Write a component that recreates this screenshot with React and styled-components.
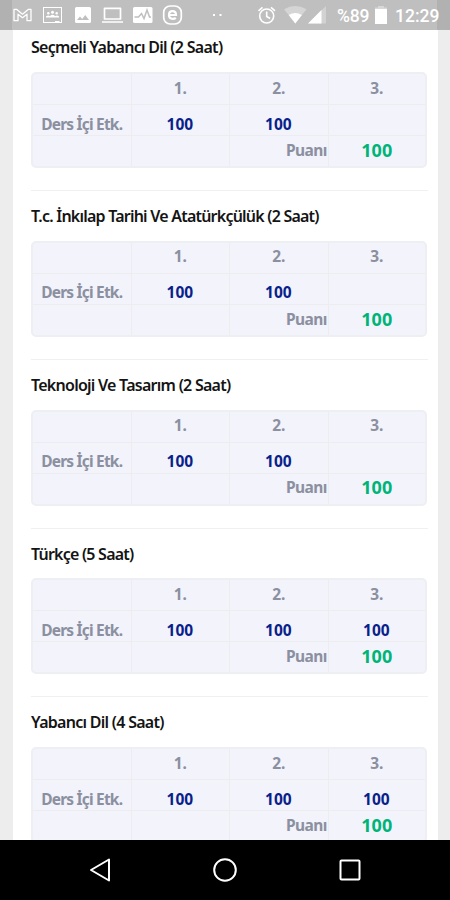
import React from "react";
import styled, { createGlobalStyle } from "styled-components";

const GlobalStyle = createGlobalStyle`
  * { box-sizing: border-box; }
  body { margin: 0; background: #ededed; }
`;

const Screen = styled.div`
  width: 450px;
  height: 900px;
  display: flex;
  flex-direction: column;
  overflow: hidden;
  background: #ededed;
  font-family: "Noto Sans", "Open Sans", sans-serif;
`;

const StatusBar = styled.header`
  flex: none;
  height: 30px;
  display: flex;
  align-items: center;
  background: linear-gradient(90deg, #b1b1b1 12px, #bfbfbf 12px, #bfbfbf 437px, #b1b1b1 437px);
  color: #fff;
  font: 500 17.5px/30px Roboto, sans-serif;
  white-space: nowrap;
`;

const StatusIcons = styled.svg`
  flex: none;
  display: block;
`;

const Battery = styled.span`
  flex: none;
  width: 37.5px;
  margin-left: 7px;
  padding-top: 1px;
  letter-spacing: -0.15px;
`;

const Clock = styled.time`
  margin-left: 8.5px;
  padding-top: 1px;
`;

const Sheet = styled.main`
  flex: 1;
  min-height: 0;
  overflow: hidden;
  margin: 0 12.5px;
  padding: 0 10px 0 18.5px;
  background: #fff;
`;

const Lesson = styled.section`
  height: 168.75px;
  border-bottom: 1px solid #f0f0f0;
  padding-top: 12.2px;
  &:first-child {
    height: 161px;
    padding-top: 4.45px;
  }
`;

const Title = styled.h2`
  margin: 0;
  height: 37.8px;
  font-size: 16px;
  line-height: 26px;
  font-weight: 600;
  color: #141414;
  white-space: nowrap;
  letter-spacing: ${(p) => p.$spacing}px;
`;

const Grades = styled.div`
  width: 396px;
  height: 96px;
  display: grid;
  grid-template-columns: 98.5px 98.5px 98.5px 1fr;
  grid-template-rows: 31px 31px 1fr;
  border: 2px solid #eeeff2;
  border-radius: 5px;
  background: #f2f3fb;
  overflow: hidden;
`;

const COLORS = { label: "#8b90a0", mark: "#0a1f8a", score: "#00b478" };

const Cell = styled.div`
  display: flex;
  align-items: center;
  justify-content: ${(p) => p.$align || "center"};
  border-right: ${(p) => (p.$last ? 0 : 1)}px solid #ededef;
  border-bottom: ${(p) => (p.$bottom ? 0 : 1)}px solid #ededef;
  padding-top: ${(p) => p.$drop || 0}px;
  padding-bottom: ${(p) => p.$lift || 0}px;
  color: ${(p) => COLORS[p.$tone || "label"]};
  font-size: ${(p) => (p.$tone === "score" ? 18 : 15.5)}px;
  line-height: 20px;
  font-weight: 700;
  white-space: nowrap;
`;

const Label = styled.span`
  letter-spacing: ${(p) => p.$spacing}px;
  padding-right: ${(p) => p.$inset || 0}px;
`;

const NavBar = styled.nav`
  flex: none;
  height: 60px;
  display: flex;
  align-items: center;
  justify-content: space-between;
  padding: 0 87px;
  background: #000;
`;

const lessons = [
  { title: "Seçmeli Yabancı Dil (2 Saat)", spacing: -0.71, marks: [100, 100, ""] },
  { title: "T.c. İnkılap Tarihi Ve Atatürkçülük (2 Saat)", spacing: -0.78, marks: [100, 100, ""] },
  { title: "Teknoloji Ve Tasarım (2 Saat)", spacing: -0.74, marks: [100, 100, ""] },
  { title: "Türkçe (5 Saat)", spacing: -0.78, marks: [100, 100, 100] },
  { title: "Yabancı Dil (4 Saat)", spacing: -0.72, marks: [100, 100, 100] },
];

function LessonCard({ title, spacing, marks }) {
  return (
    <Lesson>
      <Title $spacing={spacing}>{title}</Title>
      <Grades>
        <Cell />
        <Cell $lift={3}>1.</Cell>
        <Cell $lift={3}>2.</Cell>
        <Cell $lift={3} $last>3.</Cell>
        <Cell $drop={7}><Label $spacing={-0.8}>Ders İçi Etk.</Label></Cell>
        {marks.map((m, i) => (
          <Cell key={i} $tone="mark" $drop={7} $last={i === 2}><Label $spacing={0} $inset={0.8}>{m}</Label></Cell>
        ))}
        <Cell $bottom />
        <Cell $bottom />
        <Cell $bottom $lift={2.5} $align="flex-end"><Label $spacing={-0.6} $inset={0.8}>Puanı</Label></Cell>
        <Cell $bottom $lift={2.5} $last $tone="score"><Label $spacing={0}>100</Label></Cell>
      </Grades>
    </Lesson>
  );
}

function Notifications() {
  return (
    <StatusIcons width="330" height="30" viewBox="0 0 330 30" fill="none" stroke="#fff">
      <path d="M14 9.300v11.400h4v-6.500l4.500 3.500 4.500-3.500v6.500h4V9.300h-2.500L22.500 14.200 16.500 9.300z" strokeWidth="1.300" strokeLinejoin="round" />
      <rect x="43.500" y="7.500" width="18" height="15" strokeWidth="1" />
      <g fill="#fff" stroke="none">
        <circle cx="52.500" cy="12.300" r="1.500" />
        <circle cx="48.300" cy="13.300" r="1.200" />
        <circle cx="56.700" cy="13.300" r="1.200" />
        <path d="M46 17.500v-1.200q2-1.600 4-.4 2.500-2.200 5 0 2-1.200 4 .4v1.200zM55 21h4.500v1.500H55z" />
      </g>
      <path d="M76.500 7h13q1.500 0 1.500 1.500v13q0 1.500-1.500 1.500h-13Q75 23 75 21.500v-13Q75 7 76.500 7zM77 20h12l-3.800-5-3 4-2.200-2.500z" fill="#fff" fillRule="evenodd" stroke="none" />
      <path d="M104.500 8.300h16v10.700h-16zM102 22h21" strokeWidth="1.700" strokeLinejoin="round" />
      <rect x="133" y="7" width="19.500" height="16" rx="1.500" fill="#fff" stroke="none" />
      <path d="M134.500 17h4l3-3.500 2.500 5 3-8.500 2.500 7h1.500" stroke="#bfbfbf" strokeWidth="1.500" />
      <rect x="163.700" y="6" width="17.600" height="18" rx="6.500" strokeWidth="1.700" />
      <path d="M169.200 15h6.800q0-3.800-3.500-3.800T169 15t3.800 3.800q1.700 0 3-1" strokeWidth="2.200" />
      <path d="M213 14h2v2h-2zM219.500 14h2v2h-2z" fill="#fff" stroke="none" />
      <g strokeWidth="1.600">
        <circle cx="266.700" cy="16" r="7" />
        <path d="M266.700 11.500v5l3.500 2M258.500 10.800l4-3.500M271 7.300l4 3.500" />
      </g>
      <g fill="#fff" stroke="none">
        <path d="M284 9.300Q295.300 2.500 306.500 9.300L295.300 23.500z" opacity=".35" />
        <path d="M288.700 15Q295.300 11 301.900 15L295.300 23.500z" />
        <path d="M308 23.500 326 6v17.500z" opacity=".3" />
        <path d="M308 23.500 321.500 10v13.500z" />
      </g>
    </StatusIcons>
  );
}

export default function App() {
  return (
    <>
      <GlobalStyle />
      <Screen>
        <StatusBar>
          <Notifications />
          <Battery>%89</Battery>
          <StatusIcons width="12" height="30" viewBox="0 0 12 30" fill="#fff">
            <path d="M3 6h6v1.500h3V9H0V7.500h3z" opacity=".4" />
            <path d="M0 9h12v15H0z" />
          </StatusIcons>
          <Clock>12:29</Clock>
        </StatusBar>
        <Sheet>
          {lessons.map((l) => <LessonCard key={l.title} {...l} />)}
        </Sheet>
        <NavBar>
          <svg width="26" height="26" fill="none" stroke="#fff" strokeWidth="2" strokeLinejoin="round"><path d="M4 13 22 2.500v21z" /></svg>
          <svg width="26" height="26" fill="none" stroke="#fff" strokeWidth="2"><circle cx="13" cy="13" r="10.800" /></svg>
          <svg width="26" height="26" fill="none" stroke="#fff" strokeWidth="2"><rect x="3.500" y="3.500" width="19" height="19" rx="1" /></svg>
        </NavBar>
      </Screen>
    </>
  );
}
